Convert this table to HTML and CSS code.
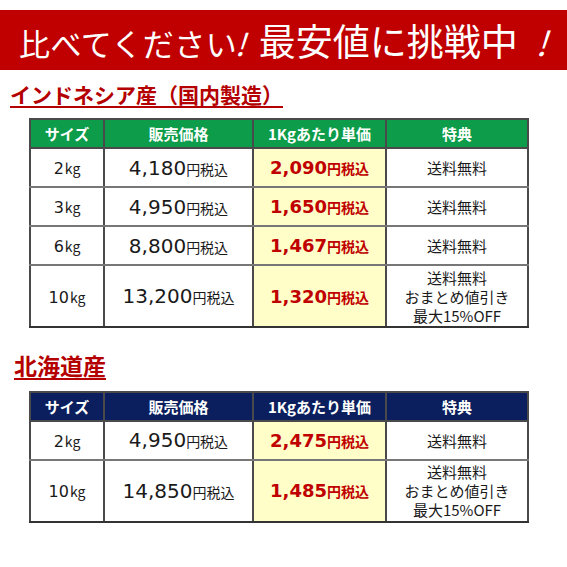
FILE: index.html
```html
<!DOCTYPE html>
<html lang="ja">
<head>
    <meta charset="UTF-8">
    <meta name="viewport" content="width=device-width, initial-scale=1.0">
    <title>比べてください！最安値に挑戦中！</title>
    <link rel="stylesheet" href="styles.css">
</head>
<body>
    <!-- Banner -->
    <div class="banner">
        <span class="banner-small">比べてください<span class="bang">!</span></span>
        <span class="banner-big">最安値に挑戦中</span>
        <span class="bang bang-big">!</span>
    </div>

    <!-- Indonesia -->
    <h2 class="origin origin-first">インドネシア産（国内製造）</h2>
    <table class="price-table green">
        <tr class="head">
            <th class="c-size">サイズ</th>
            <th class="c-price">販売価格</th>
            <th class="c-unit">1Kgあたり単価</th>
            <th class="c-extra">特典</th>
        </tr>
        <tr>
            <td><span class="size">2</span><span class="kg">kg</span></td>
            <td><span class="num">4,180</span><span class="yen">円税込</span></td>
            <td class="unit"><span class="num">2,090</span><span class="yen">円税込</span></td>
            <td class="extra">送料無料</td>
        </tr>
        <tr>
            <td><span class="size">3</span><span class="kg">kg</span></td>
            <td><span class="num">4,950</span><span class="yen">円税込</span></td>
            <td class="unit"><span class="num">1,650</span><span class="yen">円税込</span></td>
            <td class="extra">送料無料</td>
        </tr>
        <tr>
            <td><span class="size">6</span><span class="kg">kg</span></td>
            <td><span class="num">8,800</span><span class="yen">円税込</span></td>
            <td class="unit"><span class="num">1,467</span><span class="yen">円税込</span></td>
            <td class="extra">送料無料</td>
        </tr>
        <tr class="tall">
            <td><span class="size">10</span><span class="kg">kg</span></td>
            <td><span class="num">13,200</span><span class="yen">円税込</span></td>
            <td class="unit"><span class="num">1,320</span><span class="yen">円税込</span></td>
            <td class="extra">送料無料<br>おまとめ値引き<br>最大15%OFF</td>
        </tr>
    </table>

    <!-- Hokkaido -->
    <h2 class="origin origin-second">北海道産</h2>
    <table class="price-table navy">
        <tr class="head">
            <th class="c-size">サイズ</th>
            <th class="c-price">販売価格</th>
            <th class="c-unit">1Kgあたり単価</th>
            <th class="c-extra">特典</th>
        </tr>
        <tr>
            <td><span class="size">2</span><span class="kg">kg</span></td>
            <td><span class="num">4,950</span><span class="yen">円税込</span></td>
            <td class="unit"><span class="num">2,475</span><span class="yen">円税込</span></td>
            <td class="extra">送料無料</td>
        </tr>
        <tr class="tall">
            <td><span class="size">10</span><span class="kg">kg</span></td>
            <td><span class="num">14,850</span><span class="yen">円税込</span></td>
            <td class="unit"><span class="num">1,485</span><span class="yen">円税込</span></td>
            <td class="extra">送料無料<br>おまとめ値引き<br>最大15%OFF</td>
        </tr>
    </table>
</body>
</html>
```

FILE: styles.css
```css
body {
    font-family: "Noto Sans CJK JP", "Noto Sans", sans-serif;
    margin: 0;
    padding: 0;
    background-color: #ffffff;
    color: #1a1a1a;
}

/* red banner across the top */
.banner {
    margin-top: 10px;
    height: 60px;
    background-color: #c00000;
    color: #ffffff;
    display: flex;
    align-items: baseline;
    padding-left: 19px;
    line-height: 60px;
    overflow: hidden;
}

.banner-small {
    font-size: 31px;
    letter-spacing: 0.5px;
}

.banner-big {
    font-size: 37px;
    margin-left: 9px;
}

.bang {
    display: inline-block;
    transform: skewX(-18deg);
    margin-left: 2px;
}

.bang-big {
    font-size: 34px;
    margin-left: 22px;
}

/* section headings */
.origin {
    margin: 0;
    color: #b40000;
    font-weight: bold;
    text-decoration: underline;
    text-underline-offset: 3px;
    text-decoration-thickness: 2px;
    line-height: 1.2;
}

.origin-first {
    font-size: 21px;
    margin-top: 12px;
    margin-left: 10px;
}

.origin-second {
    font-size: 23px;
    margin-top: 24px;
    margin-left: 14px;
}

/* price tables */
.price-table {
    border-collapse: collapse;
    margin-left: 29px;
    margin-top: 11px;
    width: 500px;
    table-layout: fixed;
    text-align: center;
}

.navy {
    margin-top: 11px;
}

.price-table th,
.price-table td {
    border: 2px solid #4a4a4a;
    padding: 0;
}

.price-table td {
    border-top-color: #777777;
    border-bottom-color: #777777;
}

.price-table tr:last-child td {
    border-bottom-color: #333333;
}

.c-size { width: 72px; }
.c-price { width: 147px; }
.c-unit { width: 131px; }

.head th {
    color: #ffffff;
    font-size: 15px;
    font-weight: bold;
}

.green .head th {
    background-color: #0c9c4a;
}

.navy .head th {
    background-color: #0b1f5e;
}

.price-table tr {
    height: 39px;
}

.price-table tr.head {
    height: 29px;
}

.price-table tr.tall {
    height: 62px;
}

.price-table td {
    font-size: 15px;
}

.size {
    font-family: "DejaVu Sans", sans-serif;
    font-size: 16px;
}

.kg {
    font-size: 14px;
    margin-left: 1px;
}

.num {
    font-family: "DejaVu Sans", sans-serif;
    font-size: 20px;
}

.yen {
    font-size: 14px;
}

.unit {
    background-color: #fffdc8;
    color: #c00000;
    font-weight: bold;
}

.unit .num {
    font-size: 18px;
}

.extra {
    font-size: 14px;
    line-height: 19px;
}
```
